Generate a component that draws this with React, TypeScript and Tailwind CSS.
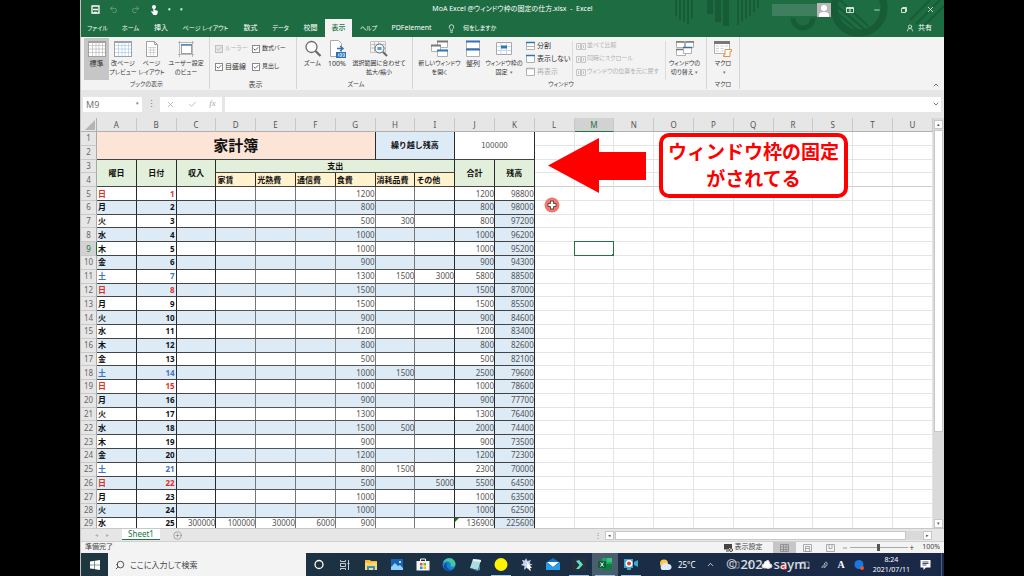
import React from 'react'
import clsx from 'clsx'
import {
  Check,
  ChevronDown,
  ChevronUp,
  CirclePlus,
  Lightbulb,
  Minus,
  Redo2,
  Search,
  Undo2,
  UserRound,
  X,
} from 'lucide-react'

type Row = {
  day: string
  date: number
  food: number
  supplies?: number
  other?: number
  total: number
  balance: number
}

const rows: Row[] = [
  { day: '日', date: 1, food: 1200, total: 1200, balance: 98800 },
  { day: '月', date: 2, food: 800, total: 800, balance: 98000 },
  { day: '火', date: 3, food: 500, supplies: 300, total: 800, balance: 97200 },
  { day: '水', date: 4, food: 1000, total: 1000, balance: 96200 },
  { day: '木', date: 5, food: 1000, total: 1000, balance: 95200 },
  { day: '金', date: 6, food: 900, total: 900, balance: 94300 },
  { day: '土', date: 7, food: 1300, supplies: 1500, other: 3000, total: 5800, balance: 88500 },
  { day: '日', date: 8, food: 1500, total: 1500, balance: 87000 },
  { day: '月', date: 9, food: 1500, total: 1500, balance: 85500 },
  { day: '火', date: 10, food: 900, total: 900, balance: 84600 },
  { day: '水', date: 11, food: 1200, total: 1200, balance: 83400 },
  { day: '木', date: 12, food: 800, total: 800, balance: 82600 },
  { day: '金', date: 13, food: 500, total: 500, balance: 82100 },
  { day: '土', date: 14, food: 1000, supplies: 1500, total: 2500, balance: 79600 },
  { day: '日', date: 15, food: 1000, total: 1000, balance: 78600 },
  { day: '月', date: 16, food: 900, total: 900, balance: 77700 },
  { day: '火', date: 17, food: 1300, total: 1300, balance: 76400 },
  { day: '水', date: 18, food: 1500, supplies: 500, total: 2000, balance: 74400 },
  { day: '木', date: 19, food: 900, total: 900, balance: 73500 },
  { day: '金', date: 20, food: 1200, total: 1200, balance: 72300 },
  { day: '土', date: 21, food: 800, supplies: 1500, total: 2300, balance: 70000 },
  { day: '日', date: 22, food: 500, other: 5000, total: 5500, balance: 64500 },
  { day: '月', date: 23, food: 1000, total: 1000, balance: 63500 },
  { day: '火', date: 24, food: 1000, total: 1000, balance: 62500 },
  { day: '水', date: 25, food: 900, total: 136900, balance: 225600 },
]

const columns = 'ABCDEFGHIJKLMNOPQRSTU'.split('')
const emptyColumns = columns.slice(11)

// kana labels are set one step smaller than kanji and latin ones
const labelSize = (label: string) => (/[ぁ-ー]/.test(label) ? 'text-[6px]' : 'text-[7px]')

const TitleArt = () => (
  <svg viewBox="0 0 290 37" className="absolute right-0 top-0 h-full w-[290px]" fill="none" stroke="#185c37">
    <g strokeWidth="2">
      <path d="M22 0v16M26 0v20M30 0v22M34 0v24M38 0v18M84 0v25M88 0v22M92 0v18M96 0v16M100 0v12M104 0v8" />
      <path d="M172 4l36 30M178 2l36 30M186 0l28 26M256 20l20-20M262 24l24-24M268 28l22-22" />
    </g>
    <path d="M56 0v14M64 0v22M72 0v26" strokeWidth="6" />
    <circle cx="205" cy="8" r="25" strokeWidth="7" />
    <path d="M139 18a9 9 0 0 0 20 0" strokeWidth="5" />
  </svg>
)

const TitleBar = () => (
  <div className="relative flex h-[19px] items-center justify-center">
    <div className="absolute left-[10px] flex items-center gap-[9px]">
      <button aria-label="上書き保存">
        <svg width="9" height="9" viewBox="0 0 9 9" fill="none" stroke="currentColor">
          <path d="M1 1h7v7H1z" strokeWidth="1.300" />
          <path d="M2 4.500h5M3 7.500h3" strokeWidth="1.500" />
        </svg>
      </button>
      <button aria-label="元に戻す" className="opacity-40"><Undo2 size={9} /></button>
      <button aria-label="やり直し" className="ml-1 opacity-40"><Redo2 size={9} /></button>
      <button aria-label="タッチ" className="ml-px">
        <svg width="9" height="10" viewBox="0 0 9 10" fill="currentColor">
          <circle cx="4" cy="2" r="2" />
          <path d="M3.300 2h1.400v3l3 .8V8L6.500 10h-3L1 6.500l1-.6 1.300 1z" />
        </svg>
      </button>
      <button aria-label="メニュー" className="flex items-center gap-[9px] text-[5px]">
        <span>▾</span>
        <span>▾</span>
      </button>
    </div>
    <h1>MoA Excel @ウィンドウ枠の固定の仕方.xlsx&nbsp; - &nbsp;Excel</h1>
    <div className="absolute right-[9px] flex items-center">
      <span className="h-3 w-[45px] bg-[#3f7f60]" />
      <span className="mr-[15px] flex h-[14px] w-[14px] items-end justify-center overflow-hidden bg-[#b8b8b8]">
        <svg viewBox="0 0 14 14" fill="#fff">
          <circle cx="7" cy="5" r="3" />
          <path d="M2 14v-2q0-3 5-3t5 3v2z" />
        </svg>
      </span>
      <button aria-label="リボンの表示オプション" className="mr-[19px]">
        <svg width="8" height="8" viewBox="0 0 8 8" fill="none" stroke="currentColor" strokeWidth=".8">
          <path d="M.5 1.500h7v5h-7zM.5 2.500h7M4 6V3.500M3 4.500l1-1 1 1" />
        </svg>
      </button>
      <button aria-label="最小化" className="mr-[19px]"><Minus size={8} /></button>
      <button aria-label="元に戻す(縮小)" className="mr-[18px]">
        <svg width="8" height="8" viewBox="0 0 8 8" fill="none" stroke="currentColor" strokeWidth=".8">
          <path d="M1.500 2.500h4v4h-4zM2.500 2.500v-1h4v4h-1" />
        </svg>
      </button>
      <button aria-label="閉じる"><X size={9} /></button>
    </div>
  </div>
)

const tabs = [
  { label: 'ファイル', width: 'w-[33px]' },
  { label: 'ホーム', width: 'w-[33px]' },
  { label: '挿入', width: 'w-[28px]' },
  { label: 'ページ レイアウト', width: 'w-[61px]' },
  { label: '数式', width: 'w-[29px]' },
  { label: 'データ', width: 'w-[31px]' },
  { label: '校閲', width: 'w-[29px]' },
  { label: '表示', width: 'w-[27px]', active: true },
  { label: 'ヘルプ', width: 'w-[33px]' },
  { label: 'PDFelement', width: 'w-[53px]' },
]

const TabBar = () => (
  <nav className="relative flex h-[18px] items-stretch">
    {tabs.map(({ label, width, active }) => (
      <button
        key={label}
        className={clsx(
          'shrink-0 whitespace-nowrap text-center',
          width,
          labelSize(label),
          active && 'bg-[#f3f3f3] font-medium text-[#217346]',
        )}
      >
        {label}
      </button>
    ))}
    <button className="ml-[9px] flex items-center gap-[7px] whitespace-nowrap text-[6px]">
      <Lightbulb size={9} />
      何をしますか
    </button>
    <button className="ml-auto mr-[12px] flex items-center gap-1">
      <UserRound size={8} />
      共有
    </button>
  </nav>
)

const GridIcon = ({ color }: { color: string }) => (
  <svg width="18" height="18" viewBox="0 0 18 18" fill="none">
    <rect x=".5" y="1.500" width="17" height="15" fill="#fff" stroke="#a0a0a0" />
    <path d="M1 2.500h16" stroke="#a0a0a0" />
    <path d="M4.500 2v14M8 2v14M11 2v14M14.500 2v14M1 5.500h16M1 9h16M1 12.500h16" stroke={color} strokeWidth=".6" />
  </svg>
)
const PageIcon = () => (
  <svg width="18" height="18" viewBox="0 0 18 18" fill="#fff" stroke="#a0a0a0">
    <path d="M3.500 1.500h8l3 3v12h-11zM11.500 1.500v3h3" />
    <path d="M5 7.500h8M5 10h8M5 12.500h8M7.500 7v8M10.500 7v8" stroke="#c4c4c4" strokeWidth=".7" />
  </svg>
)
const CustomViewIcon = () => (
  <svg width="18" height="18" viewBox="0 0 18 18" fill="none" stroke="#a0a0a0">
    <path d="M1 2.500h16M1 14.500h16M2.500 1v16M15.500 1v16" strokeWidth=".7" />
    <rect x="4.500" y="4.500" width="10" height="9" fill="#fff" />
    <path d="M4 5h11" stroke="#4a86c0" strokeWidth="1.500" />
  </svg>
)
const MagnifierIcon = () => (
  <svg width="18" height="18" viewBox="0 0 18 18" fill="none" stroke="#6a6a6a">
    <circle cx="7.500" cy="7" r="5.500" fill="#fbfbfb" strokeWidth="1.300" />
    <path d="M11.500 11l5 5" strokeWidth="2.300" />
  </svg>
)
const HundredIcon = () => (
  <svg width="18" height="18" viewBox="0 0 18 18" fill="none">
    <path d="M2.500.5h8l3 3v13h-11z" fill="#fff" stroke="#a8a8a8" />
    <path d="M9 8.500h6M12 6l3 2.500L12 11" stroke="#2f75b5" strokeWidth="1.500" />
    <rect x="8" y="12" width="10" height="6" fill="#2f75b5" />
    <path d="M10.500 13.500v3M12 13.500h1.500v3H12zM15 13.500h1.500v3H15z" stroke="#fff" strokeWidth=".6" />
  </svg>
)
const ZoomSelectionIcon = () => (
  <svg width="18" height="18" viewBox="0 0 18 18" fill="none">
    <path d="M.5 1.500h15v11H.5zM.5 4.500h15M.5 8h15M4.500 1.500v11M8.500 1.500v11" stroke="#b8b8b8" strokeWidth=".8" />
    <circle cx="9.500" cy="8.500" r="4.500" fill="#f0f6fb" stroke="#666" />
    <path d="M13 12l4 4" stroke="#666" strokeWidth="2" />
    <path d="M7.500 7h4v3h-4z" fill="#5b9bd5" />
  </svg>
)
const NewWindowIcon = () => (
  <svg width="18" height="18" viewBox="0 0 18 18" fill="#fff" stroke="#b0b0b0">
    <path d="M6.500 1.500h10v6h-10z" />
    <path d="M6 1.500h11" stroke="#777" strokeWidth="2" />
    <path d="M.5 5.500h9v6h-9z" />
    <path d="M0 5.500h10" stroke="#777" strokeWidth="2" />
    <path d="M6.500 10.500h10v6h-10z" />
    <path d="M6 10.500h11" stroke="#2f75b5" strokeWidth="2" />
  </svg>
)
const ArrangeIcon = () => (
  <svg width="16" height="18" viewBox="0 0 16 18" fill="#fff" stroke="#b0b0b0">
    <path d="M1.500 1.500h13v7h-13zM1.500 9.500h13v7h-13z" />
    <path d="M1 1.500h14M1 9.500h14" stroke="#2f75b5" strokeWidth="2" />
  </svg>
)
const FreezeIcon = () => (
  <svg width="18" height="18" viewBox="0 0 18 18" fill="none">
    <path d="M1.500 2.500h15v12h-15z" fill="#fff" stroke="#a8a8a8" />
    <path d="M2 6.500h14M2 10.500h14M6 3v11M11.500 3v11" stroke="#b5cde6" strokeWidth=".8" />
    <path d="M6 5.500h6v3H6z" fill="#2f75b5" />
  </svg>
)
const SwitchWindowIcon = () => (
  <svg width="18" height="18" viewBox="0 0 18 18" fill="#fff" stroke="#b0b0b0">
    <path d="M.5 1.500h8v6h-8zM9.500 1.500h8v6h-8zM.5 9.500h9v6h-9z" />
    <path d="M0 2h8.500M9.500 2H18M0 9.500h9" stroke="#777" strokeWidth="1.500" />
    <path d="M7.500 7.500h8v6h-8z" />
    <path d="M7 7.500h9" stroke="#2f75b5" strokeWidth="1.500" />
  </svg>
)
const MacroIcon = () => (
  <svg width="18" height="18" viewBox="0 0 18 18" fill="#fff">
    <path d="M.5 1.500h15v12H.5z" stroke="#b0b0b0" />
    <path d="M0 2.500h16" stroke="#777" strokeWidth="3" />
    <path d="M2 6h3M6.500 6h3M11 6h3M2 8.500h3M6.500 8.500h3M2 11h3M6.500 11h3" stroke="#d0d0d0" />
    <path d="M11 9.500h6.500v2h-1.500v5H9.500v-1.500H11z" stroke="#ed8a3f" />
  </svg>
)

type BigButtonProps = {
  icon: React.ReactNode
  lines: string[]
  className: string
  arrow?: boolean
}

const BigButton: React.FC<BigButtonProps> = ({ icon, lines, className, arrow }) => (
  <button
    className={clsx(
      'flex h-[42px] shrink-0 flex-col items-center pt-[2px] leading-[9px]',
      labelSize(lines.join('')),
      className,
    )}
  >
    <span className="mb-px flex h-[18px] items-center">{icon}</span>
    {lines.map((line, i) => (
      <span key={line} className="whitespace-nowrap">
        {line}
        {arrow && i === lines.length - 1 && <span className="ml-[2px] text-[5px] text-[#777]">▾</span>}
      </span>
    ))}
  </button>
)

const Group: React.FC<{ title: string; className: string; children: React.ReactNode }> = ({
  title,
  className,
  children,
}) => (
  <section className={clsx('flex shrink-0 flex-col justify-between border-r border-[#d5d5d5] pt-px', className)}>
    <div className="flex">{children}</div>
    <h2 className={clsx('text-center leading-[9px] text-[#444]', labelSize(title))}>{title}</h2>
  </section>
)

const CheckItem = ({ label, disabled }: { label: string; disabled?: boolean }) => (
  <label
    className={clsx('flex items-center gap-[2px] whitespace-nowrap', labelSize(label), disabled && 'text-[#b0b0b0]')}
  >
    <span className="relative flex">
      <input
        type="checkbox"
        defaultChecked
        disabled={disabled}
        className="h-[8px] w-[8px] appearance-none border border-[#8a8a8a] bg-white disabled:border-[#c0c0c0] disabled:bg-[#e6e6e6]"
      />
      <Check size={6} strokeWidth={3} className="pointer-events-none absolute left-px top-px" />
    </span>
    {label}
  </label>
)

const PaneIcon = ({ color, split }: { color: string; split?: boolean }) => (
  <svg width="9" height="9" viewBox="0 0 9 9" fill="#fff">
    <path d="M.5 1.500h8v7h-8z" stroke="#b0b0b0" />
    <path d="M0 1.500h9" stroke={color} strokeWidth="1.500" />
    {split && <path d="M1 5.500h7" stroke="#b0b0b0" />}
  </svg>
)
const SideIcon = () => (
  <svg width="10" height="8" viewBox="0 0 10 8" className="shrink-0" fill="none" stroke="#c4c4c4">
    <path d="M.5 1.500h4v6h-4zM5.500 1.500h4v6h-4zM2.500 3v3M7.500 3v3" />
  </svg>
)

const Ribbon = () => (
  <div className="flex h-[53px] shrink-0 bg-[#f3f3f3] pb-px text-[7px] text-[#333]">
    <Group title="ブックの表示" className="w-[129px] pl-[3px]">
      <BigButton icon={<GridIcon color="#b0b0b0" />} lines={['標準']} className="w-[25px] bg-[#c6c6c6]" />
      <BigButton icon={<GridIcon color="#9dc3e6" />} lines={['改ページ', 'プレビュー']} className="w-[28px]" />
      <BigButton icon={<PageIcon />} lines={['ページ', 'レイアウト']} className="w-[29px]" />
      <BigButton icon={<CustomViewIcon />} lines={['ユーザー設定', 'のビュー']} className="w-[40px]" />
    </Group>
    <Group title="表示" className="w-[87px] pl-[5px]">
      <div className="grid grid-cols-[37px_1fr] gap-y-[9px] pt-[6px] leading-[9px]">
        <CheckItem label="ルーラー" disabled />
        <CheckItem label="数式バー" />
        <CheckItem label="目盛線" />
        <CheckItem label="見出し" />
      </div>
    </Group>
    <Group title="ズーム" className="w-[116px] pl-[3px]">
      <BigButton icon={<MagnifierIcon />} lines={['ズーム']} className="w-[25px]" />
      <BigButton icon={<HundredIcon />} lines={['100%']} className="w-[24px]" />
      <BigButton icon={<ZoomSelectionIcon />} lines={['選択範囲に合わせて', '拡大/縮小']} className="w-[60px]" />
    </Group>
    <Group title="ウィンドウ" className="w-[294px] pl-[3px]">
      <BigButton icon={<NewWindowIcon />} lines={['新しいウィンドウ', 'を開く']} className="w-[47px]" />
      <BigButton icon={<ArrangeIcon />} lines={['整列']} className="w-[20px]" />
      <BigButton icon={<FreezeIcon />} lines={['ウィンドウ枠の', '固定']} arrow className="w-[42px]" />
      <div className="ml-px flex w-[46px] flex-col gap-[4px] pt-[3px] leading-[9px]">
        <button className="flex gap-[2px]"><PaneIcon color="#2f75b5" split />分割</button>
        <button className="flex gap-[2px] whitespace-nowrap"><PaneIcon color="#2f75b5" />表示しない</button>
        <button className="flex gap-[2px] text-[#b0b0b0]"><PaneIcon color="#b0b0b0" />再表示</button>
      </div>
      <div className="mt-[3px] flex w-[94px] flex-col gap-[4px] whitespace-nowrap border-x border-[#dcdcdc] pl-[3px] text-[6px] leading-[9px] text-[#b0b0b0]">
        <button disabled className="flex items-center gap-px"><SideIcon />並べて比較</button>
        <button disabled className="flex items-center gap-px"><SideIcon />同時にスクロール</button>
        <button disabled className="flex items-center gap-px"><SideIcon />ウィンドウの位置を元に戻す</button>
      </div>
      <BigButton icon={<SwitchWindowIcon />} lines={['ウィンドウの', '切り替え']} arrow className="w-[37px]" />
    </Group>
    <Group title="マクロ" className="w-[33px]">
      <BigButton icon={<MacroIcon />} lines={['マクロ', '']} arrow className="w-full" />
    </Group>
    <button aria-label="リボンを折りたたむ" className="ml-auto mr-[4px] self-end">
      <ChevronUp size={8} />
    </button>
  </div>
)

const FormulaBar = () => (
  <div className="flex h-[28px] shrink-0 items-center bg-[#e6e6e6] pl-[2px] pr-[3px] text-[#777]">
    <label className="flex h-[15px] w-[59px] items-center bg-white">
      <input aria-label="名前ボックス" defaultValue="M9" className="w-full pl-[3px] text-[9px] leading-[15px] outline-none" />
      <span className="mr-[3px] text-[5px]">▾</span>
    </label>
    <span className="w-[18px] text-center text-[9px]">⋮</span>
    <div className="flex h-[15px] w-[62px] items-center justify-around bg-white text-[#aaa]">
      <button aria-label="キャンセル"><X size={9} /></button>
      <button aria-label="入力"><Check size={9} /></button>
      <button aria-label="関数の挿入" className="font-['Liberation_Serif',serif] text-[9px] italic">fx</button>
    </div>
    <div className="ml-[3px] flex h-[15px] flex-1 items-center bg-white">
      <input aria-label="数式バー" className="min-w-0 flex-1 outline-none" />
      <ChevronDown size={8} strokeWidth={3} className="mr-px" />
    </div>
  </div>
)

const thin = 'border-b border-r border-b-[#555] border-r-[#777]'
const bold = 'border-b border-r border-b-[#444] border-r-[#2a2a2a]'
const jp = "font-['Noto_Sans_CJK_JP',sans-serif]"

const RowHead = ({ n }: { n: number }) => (
  <th
    scope="row"
    className={clsx(
      "border-b border-r border-b-[#c8c8c8] text-center font-['Noto_Sans',sans-serif] font-normal",
      n === 9 ? 'border-r-[#217346] bg-[#d2d2d2] text-[#217346]' : 'border-r-[#aaa] bg-[#e6e6e6] text-[#666]',
    )}
  >
    {n}
  </th>
)

const EmptyCells = ({ n }: { n: number }) => (
  <>
    {emptyColumns.map((c) => (
      <td
        key={c}
        className={clsx(
          'relative border-b border-r border-r-[#e4e4e4]',
          n === 4 ? 'border-b-[#cfcfcf]' : 'border-b-[#e4e4e4]',
        )}
      >
        {c === 'M' && n === 9 && (
          <span className="absolute -inset-px border border-[#217346]">
            <span className="absolute -bottom-px -right-px h-[2px] w-[2px] bg-[#217346]" />
          </span>
        )}
      </td>
    ))}
  </>
)

const Sheet = () => (
  <table className="h-[calc(100%+4px)] w-full table-fixed border-separate border-spacing-0 bg-white text-[8px] leading-[10px] text-[#555] [&_td]:p-0 [&_th]:p-0">
    <colgroup>
      <col className="w-[16px]" />
      {columns.map((c) => (
        <col key={c} />
      ))}
    </colgroup>
    <thead>
      <tr className="h-[14px] bg-[#e6e6e6]">
        <th aria-label="すべて選択" className="border-b border-r border-[#b0b0b0]">
          <svg viewBox="0 0 10 10" className="ml-auto mr-px h-[10px] w-[10px]" fill="#b4b4b4">
            <path d="M10 0v10H0z" />
          </svg>
        </th>
        {columns.map((c) => (
          <th
            key={c}
            scope="col"
            className={clsx(
              'border-b border-r border-r-[#c8c8c8] font-normal',
              c === 'M' ? 'border-b-[#217346] bg-[#d2d2d2] text-[#217346]' : 'border-b-[#b0b0b0]',
            )}
          >
            {c}
          </th>
        ))}
      </tr>
    </thead>
    <tbody className="[&_tr]:h-[13px]">
      <tr className={jp}>
        <RowHead n={1} />
        <td
          colSpan={7}
          rowSpan={2}
          className={clsx(bold, 'bg-[#fce4d6] text-center text-[15px] font-bold leading-[20px] text-[#111]')}
        >
          家計簿
        </td>
        <td colSpan={2} rowSpan={2} className={clsx(bold, 'bg-[#ddebf7] text-center font-bold text-[#111]')}>
          繰り越し残高
        </td>
        <td colSpan={2} rowSpan={2} className={clsx(bold, 'text-center')}>
          100000
        </td>
        <EmptyCells n={1} />
      </tr>
      <tr>
        <RowHead n={2} />
        <EmptyCells n={2} />
      </tr>
      <tr className={clsx(jp, 'text-[#111]')}>
        <RowHead n={3} />
        {['曜日', '日付', '収入'].map((h) => (
          <th key={h} rowSpan={2} className={clsx(bold, 'bg-[#e2efda] font-bold')}>
            {h}
          </th>
        ))}
        <th colSpan={6} className={clsx(bold, 'bg-[#e2efda] font-bold')}>
          支出
        </th>
        {['合計', '残高'].map((h) => (
          <th key={h} rowSpan={2} className={clsx(bold, 'bg-[#e2efda] font-bold')}>
            {h}
          </th>
        ))}
        <EmptyCells n={3} />
      </tr>
      <tr className={clsx(jp, 'text-[#111]')}>
        <RowHead n={4} />
        {['家賃', '光熱費', '通信費', '食費', '消耗品費', 'その他'].map((h) => (
          <th key={h} className={clsx(bold, 'whitespace-nowrap bg-[#fff2cc] text-left font-bold')}>
            <span className="ml-px">{h}</span>
          </th>
        ))}
        <EmptyCells n={4} />
      </tr>
      {rows.map((row, i) => {
        const last = row.date === 25
        const dayColor = row.day === '日' ? 'text-[#e0301e]' : row.day === '土' ? 'text-[#4472c4]' : 'text-[#111]'
        const stripe = i % 2 === 1 && 'bg-[#ddebf7]'
        return (
          <tr key={row.date} className={clsx('text-right', last && 'align-top')}>
            <RowHead n={i + 5} />
            <td className={clsx(bold, stripe, dayColor, jp, 'text-left font-bold')}>
              <span className="ml-px">{row.day}</span>
            </td>
            <td className={clsx(bold, stripe, dayColor, 'font-bold')}>
              <span className="mr-px">{row.date}</span>
            </td>
            <td className={clsx(bold, stripe)}>{last && 300000}</td>
            <td className={clsx(thin, stripe)}>{last && 100000}</td>
            <td className={clsx(thin, stripe)}>{last && 30000}</td>
            <td className={clsx(thin, stripe)}>{last && 6000}</td>
            <td className={clsx(thin, stripe)}>{row.food}</td>
            <td className={clsx(thin, stripe)}>{row.supplies}</td>
            <td className={clsx(bold, stripe)}>{row.other}</td>
            <td className={clsx(bold, stripe, 'relative')}>
              {last && (
                <svg viewBox="0 0 4 4" className="absolute left-0 top-0 h-[4px] w-[4px]" fill="#107c10">
                  <path d="M0 0h4L0 4z" />
                </svg>
              )}
              {row.total}
            </td>
            <td className={clsx(bold, i > 0 && 'bg-[#ddebf7]')}>{row.balance}</td>
            <EmptyCells n={i + 5} />
          </tr>
        )
      })}
    </tbody>
  </table>
)

const ScrollArrow = ({ label, glyph }: { label: string; glyph: string }) => (
  <button
    aria-label={label}
    className="flex h-[9px] w-[9px] shrink-0 items-center justify-center border border-[#c8c8c8] bg-white text-[5px] leading-none text-[#555]"
  >
    {glyph}
  </button>
)

// annotations drawn over the sheet
const Callout = () => (
  <>
    <svg viewBox="0 0 98 55" className="absolute left-[467px] top-[20px] h-[55px] w-[98px]" fill="#fe0000">
      <path d="M0 27.500 51 0v14h47v28H51v13z" />
    </svg>
    <p
      className={clsx(
        jp,
        'absolute left-[578px] top-[15px] h-[65px] w-[189px] whitespace-nowrap rounded-[10px] border-4 border-[#fe0000] bg-white text-center text-[19px] font-bold leading-[27px] text-[#fe0000]',
      )}
    >
      ウィンドウ枠の固定
      <br />
      がされてる
    </p>
    <svg viewBox="0 0 16 16" className="absolute left-[463px] top-[79px] h-4 w-4">
      <circle cx="8" cy="8" r="7.500" fill="#f2776d" />
      <path d="M6.500 4h3v2.500H12v3H9.500V12h-3V9.500H4v-3h2.500z" fill="#fff" stroke="#333" strokeWidth=".8" />
    </svg>
  </>
)

const SheetTabs = () => (
  <div className="flex h-[13px] shrink-0 items-center border-t border-[#c8c8c8] bg-[#e6e6e6] pr-[12px]">
    <span className="flex w-[41px] justify-center gap-[8px] text-[6px] text-[#b0b0b0]">
      <button aria-label="前のシート">◂</button>
      <button aria-label="次のシート">▸</button>
    </span>
    <button className="h-[11px] w-[38px] self-start border-b border-[#217346] bg-white text-[8px] leading-[10px] text-[#217346]">
      Sheet1
    </button>
    <button aria-label="新しいシート" className="ml-[13px] text-[#777]"><CirclePlus size={9} strokeWidth={1.5} /></button>
    <span className="ml-auto mr-[3px] text-[8px] text-[#888]">⋮</span>
    <div className="flex w-[327px] shrink items-center bg-[#dadada]">
      <ScrollArrow label="左へ" glyph="◂" />
      <span className="ml-px h-[9px] w-[89%] border border-[#c8c8c8] bg-white" />
      <span className="flex-1" />
      <ScrollArrow label="右へ" glyph="▸" />
    </div>
  </div>
)

const StatusBar = () => (
  <div className="flex h-[12px] shrink-0 items-center border-t border-[#d0d0d0] bg-[#f3f3f3] px-[4px] text-[7px] text-[#444]">
    <span>準備完了</span>
    <button className="ml-auto mr-[10px] flex items-center gap-[2px]">
      <svg width="9" height="8" viewBox="0 0 9 8" fill="#444">
        <path d="M0 0h8v4H5v1.500H0zM2 6.500h3v1H2z" />
        <circle cx="7" cy="6" r="1.500" fill="none" stroke="#444" />
      </svg>
      表示設定
    </button>
    <button aria-label="標準" className="flex h-[12px] w-[23px] items-center justify-center bg-[#c6c6c6]">
      <svg width="9" height="8" viewBox="0 0 9 8" fill="none" stroke="#888" strokeWidth=".8">
        <path d="M.5.5h8v7h-8zM3.500.5v7M6 .5v7M.5 3h8M.5 5.500h8" />
      </svg>
    </button>
    <button aria-label="ページ レイアウト" className="flex w-[23px] justify-center">
      <svg width="9" height="8" viewBox="0 0 9 8" fill="none" stroke="#999" strokeWidth=".8">
        <path d="M.5.500h8v7h-8zM2.500 2.500h4v5h-4zM3 4.500h3" />
      </svg>
    </button>
    <button aria-label="改ページ プレビュー" className="flex w-[23px] justify-center">
      <svg width="9" height="8" viewBox="0 0 9 8" fill="none" stroke="#999" strokeWidth=".8">
        <path d="M.5.500h8v7h-8zM3 .5v4h3v-4" />
      </svg>
    </button>
    <button aria-label="縮小"><Minus size={6} /></button>
    <input
      type="range"
      aria-label="ズーム"
      className="mx-[2px] h-[8px] w-[58px] appearance-none bg-[linear-gradient(#aaa,#aaa)] bg-[length:100%_1px] bg-center bg-no-repeat [&::-webkit-slider-thumb]:h-[7px] [&::-webkit-slider-thumb]:w-[3px] [&::-webkit-slider-thumb]:appearance-none [&::-webkit-slider-thumb]:bg-[#555]"
    />
    <button aria-label="拡大" className="text-[8px] leading-none">+</button>
    <span className="ml-[8px]">100%</span>
  </div>
)

type TaskProps = { label: string; open?: boolean; active?: boolean; children: React.ReactNode }

const Task: React.FC<TaskProps> = ({ label, open, active, children }) => (
  <button
    aria-label={label}
    className={clsx('flex h-[23px] w-[26px] shrink-0 flex-col items-center justify-between', active && 'bg-[#4a5f6e]')}
  >
    <svg width="14" height="14" viewBox="0 0 14 14" className="mt-[4px]">{children}</svg>
    {open && <span className="h-px w-[20px] bg-[#9cc8ea]" />}
  </button>
)

const Taskbar = () => (
  <div className="relative flex h-[23px] shrink-0 items-center bg-linear-to-r from-[#1d3640] to-[#1a2848] text-white">
    <button aria-label="スタート" className="flex w-[27px] justify-center">
      <svg width="10" height="10" viewBox="0 0 10 10" fill="#fff">
        <path d="M0 1.400 4.500.8v3.900H0zM5 .7 10 0v4.700H5zM0 5.200h4.500v3.900L0 8.500zM5 5.200h5V10l-5-.7z" />
      </svg>
    </button>
    <label className="flex h-full w-[198px] items-center gap-[5px] bg-[#f3f3f3] pl-[7px] text-[#333]">
      <Search size={10} className="-scale-x-100" />
      <input
        aria-label="検索"
        placeholder="ここに入力して検索"
        className={clsx(jp, 'min-w-0 flex-1 text-[8px] outline-none placeholder:text-[#444] placeholder:opacity-100')}
      />
    </label>
    <div className="flex">
      <Task label="Cortana"><circle cx="7" cy="7.500" r="4" fill="none" stroke="#fff" strokeWidth="1.300" /></Task>
      <Task label="タスク ビュー">
        <path d="M2.500 3v1.500h5V3M2.500 13v-1.500h5V13M2.500 6.500h5v3h-5zM10.500 3v10M9.500 6.500h2" fill="none" stroke="#ddd" strokeWidth=".9" />
      </Task>
      <Task label="エクスプローラー">
        <path d="M1 3h5l1 1h6v9H1z" fill="#f5b83d" />
        <path d="M1 5.500h12V13H1z" fill="#ffd866" />
        <path d="M3 13V9h8v4H9v-2H5v2z" fill="#2f8fd8" />
      </Task>
      <Task label="フォト">
        <path d="M1 2h12v11H1z" fill="#1564b3" />
        <path d="M1 13V10l4-4 3 3 2-1 3 3v2z" fill="#8fd0ff" />
        <circle cx="10" cy="5" r="1" fill="#fff" />
      </Task>
      <Task label="ストア">
        <path d="M4.500 4.500V2h5v2.500" fill="none" stroke="#fff" />
        <path d="M.5 4h13v9.500H.5z" fill="#f4f4f4" />
        <path d="M4 6h2.500v2.500H4z" fill="#f25022" />
        <path d="M7.500 6H10v2.500H7.500z" fill="#7fba00" />
        <path d="M4 9.500h2.500V12H4z" fill="#00a4ef" />
        <path d="M7.500 9.500H10V12H7.500z" fill="#ffb900" />
      </Task>
      <Task label="Edge">
        <circle cx="7" cy="7.500" r="6.500" fill="#1b7fd4" />
        <path d="M1 6C2 0 13-1 13.500 7c0 3-4 3.500-5 2 1-3-1-4.500-3-4.500S1.500 5 1 6z" fill="#40c8a0" />
        <path d="M5.500 6C3 9 6 13.500 11 12.500 8 15 2 13.500 2 9c0-2 2-3 3.500-3z" fill="#0c4f9c" />
      </Task>
      <Task label="メモ帳">
        <path d="M5 2l8 1-3 10-8-2z" fill="#a9dbe4" />
        <path d="M5 2l8 1v2l-8-1z" fill="#e8f4f6" />
        <path d="M2 11l8 2 2-6v6l-3 1z" fill="#5c8c98" />
      </Task>
      <Task label="録画" open><circle cx="7" cy="7.500" r="6.500" fill="#fff200" /></Task>
      <Task label="アプリ">
        <path d="M6 1l1.500 3L11 3 9.500 6l3 2-3 .5.5 4-3-2-3 2.500.5-4L1 8l2.500-2L2 3l3 .5z" fill="#c8d4ec" />
        <path d="M7 5l5 6-2 0 1 3-2-1-1-2-1 1z" fill="#fff" />
      </Task>
      <Task label="メール">
        <path d="M0 5.500 7 1l7 4.500V13H0z" fill="#1271c4" />
        <path d="M1 5h12l-6 5z" fill="#fff" />
        <path d="M0 5.500 7 10l7-4.500V13H0z" fill="#2a9be8" />
      </Task>
      <Task label="Filmora" open>
        <path d="M0 1h14v13H0z" fill="#26323a" />
        <path d="M4 4l3-1 4 4.500-4 4.500-3 0L7.500 8z" fill="#5fe3c8" />
      </Task>
      <Task label="Excel" open active>
        <path d="M4 1h10v12H4z" fill="#21a366" />
        <path d="M9 1h5v4H9z" fill="#33c481" />
        <path d="M4 7h10v6H4z" fill="#107c41" />
        <path d="M0 4h8v7H0z" fill="#0e6136" />
        <path d="M2.500 5.500l3 4M5.500 5.500l-3 4" stroke="#fff" />
      </Task>
      <Task label="カメラ" open>
        <path d="M0 2h9v9H0zM10 5l4-2v7l-4-2zM3 11h4v2H3z" fill="#38a9c8" />
        <circle cx="5" cy="6.500" r="3.500" fill="#fff" />
        <circle cx="5" cy="6.500" r="2" fill="#e5383b" />
      </Task>
    </div>
    <div className="ml-auto flex items-center pr-[2px] text-[8px]">
      <svg width="13" height="12" viewBox="0 0 13 12" className="mr-[6px]">
        <circle cx="5" cy="4.500" r="4" fill="#ffc83d" />
        <path d="M3 11a3 3 0 0 1 0-5 4 4 0 0 1 6-1 3 3 0 0 1 1 6z" fill="#dcebfa" />
      </svg>
      <span>25°C</span>
      <ChevronUp size={9} className="ml-[10px]" />
      <svg width="98" height="12" viewBox="0 0 98 12" className="ml-[15px] mr-[10px]" fill="none" stroke="#ccc">
        <path d="M3 3h6v6H3zM20 2v8M18 4h4" opacity=".6" />
        <path d="M34 9a2 2 0 0 1 0-4 3 3 0 0 1 6 0 2 2 0 0 1 0 4z" fill="#fff" />
        <circle cx="54" cy="8" r="3" fill="#e5383b" stroke="none" />
        <path d="M71 3h8v6h-8z" opacity=".6" />
        <path d="M92 9c0-3 3-3 2-1s4-1 3-4-5 3-1 2" strokeWidth=".9" />
      </svg>
      <span className="font-['Liberation_Serif',serif] text-[10px] font-bold">A</span>
      <svg width="10" height="10" viewBox="0 0 10 10" className="ml-[9px]">
        <circle cx="5" cy="4.500" r="4.500" fill="#1878e0" />
        <circle cx="8" cy="8" r="2" fill="#e8533a" />
      </svg>
      <time dateTime="2021-07-11T08:24" className="ml-[9px] text-center text-[7px] leading-[10px]">
        8:24
        <br />
        2021/07/11
      </time>
      <svg width="11" height="11" viewBox="0 0 11 11" className="ml-[10px] mr-[10px]">
        <path d="M.5 1h10v7.500H6L3.500 11V8.500h-3z" fill="#fff" />
        <path d="M2.500 3h6M2.500 4.500h6M2.500 6h4" stroke="#1a2848" strokeWidth=".8" />
      </svg>
      <span className="h-[23px] w-px bg-[#51607a]" />
    </div>
    <p className="absolute right-[134px] top-[2px] whitespace-nowrap font-['Noto_Sans',sans-serif] text-[13px] font-medium leading-[18px] text-white/85">
      © 2024 saym.
    </p>
  </div>
)

const App = () => (
  <div className="h-screen bg-black px-20 font-['Noto_Sans','Noto_Sans_CJK_JP',sans-serif] text-[7px]">
    <div className="flex h-full flex-col overflow-hidden border-l border-[#c0c0c0] bg-[#e6e6e6] [font-feature-settings:'palt']">
      <header className="relative shrink-0 bg-[#1e6c41] text-white">
        <TitleArt />
        <TitleBar />
        <TabBar />
      </header>
      <Ribbon />
      <FormulaBar />
      <main className="relative flex min-h-0 flex-1 [font-feature-settings:normal]">
        <div className="min-w-0 flex-1 overflow-hidden">
          <Sheet />
        </div>
        <div className="flex w-[11px] flex-col items-center bg-[#dadada] pt-[2px]">
          <ScrollArrow label="上へ" glyph="▴" />
          <span className="mt-px h-[74%] w-[9px] border border-[#c8c8c8] bg-white" />
          <span className="flex-1" />
          <ScrollArrow label="下へ" glyph="▾" />
        </div>
        <Callout />
      </main>
      <SheetTabs />
      <StatusBar />
      <Taskbar />
    </div>
  </div>
)

export default App
